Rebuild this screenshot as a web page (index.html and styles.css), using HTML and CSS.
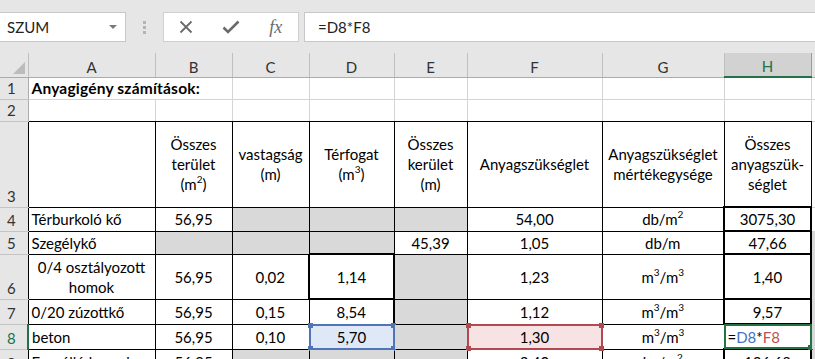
FILE: index.html
```html
<!DOCTYPE html>
<html lang="hu">

<head>
    <meta charset="UTF-8">
    <meta name="viewport" content="width=device-width, initial-scale=1.0">
    <title>Anyagigény számítások</title>
    <link rel="stylesheet" href="styles.css">
</head>

<body>
    <div class="toolbar">
        <div class="name-box">
            <span>SZUM</span>
            <span class="name-arrow"></span>
        </div>
        <div class="grip"><span></span><span></span><span></span></div>
        <div class="fx-box">
            <svg width="14" height="14" viewBox="0 0 14 14"><path d="M1.5 1.5L12.5 12.5M12.5 1.5L1.5 12.5" stroke="#6a6a6a" stroke-width="1.8" fill="none"/></svg>
            <svg width="18" height="14" viewBox="0 0 18 14"><path d="M1.5 7.5L6 12L16.5 1.5" stroke="#6a6a6a" stroke-width="2.6" fill="none"/></svg>
            <span class="fx">fx</span>
        </div>
        <div class="formula">=D8*F8</div>
    </div>

    <table class="sheet">
        <colgroup>
            <col class="col-rh">
            <col class="col-a">
            <col class="col-b">
            <col class="col-c">
            <col class="col-d">
            <col class="col-e">
            <col class="col-f">
            <col class="col-g">
            <col class="col-h">
            <col class="col-i">
        </colgroup>
        <tr class="row-hdr">
            <th class="corner"><span class="corner-tri"></span></th>
            <th class="ch">A</th>
            <th class="ch">B</th>
            <th class="ch">C</th>
            <th class="ch">D</th>
            <th class="ch">E</th>
            <th class="ch">F</th>
            <th class="ch">G</th>
            <th class="ch ch-sel">H</th>
            <th class="ch"></th>
        </tr>
        <tr class="row-1">
            <th class="rh">1</th>
            <td class="title" colspan="2">Anyagigény számítások:</td>
            <td></td><td></td><td></td><td></td><td></td><td></td><td></td>
        </tr>
        <tr class="row-2">
            <th class="rh">2</th>
            <td class="bb"></td><td class="bb"></td><td class="bb"></td><td class="bb"></td>
            <td class="bb"></td><td class="bb"></td><td class="bb"></td><td class="bb"></td>
            <td></td>
        </tr>
        <tr class="row-3">
            <th class="rh rh-t">3</th>
            <td class="t"></td>
            <td class="t c wrap">Összes<br>terület<br>(m<sup>2</sup>)</td>
            <td class="t c wrap">vastagság<br>(m)</td>
            <td class="t c wrap">Térfogat<br>(m<sup>3</sup>)</td>
            <td class="t c wrap">Összes<br>kerület<br>(m)</td>
            <td class="t c wrap">Anyagszükséglet</td>
            <td class="t c wrap">Anyagszükséglet<br>mértékegysége</td>
            <td class="t c wrap">Összes<br>anyagszük-<br>séglet</td>
            <td></td>
        </tr>
        <tr class="row-4">
            <th class="rh rh-t">4</th>
            <td class="t l">Térburkoló kő</td>
            <td class="t c">56,95</td>
            <td class="t grey"></td>
            <td class="t grey"></td>
            <td class="t grey"></td>
            <td class="t c">54,00</td>
            <td class="t c">db/m<sup>2</sup></td>
            <td class="t c thick">3075,30</td>
            <td></td>
        </tr>
        <tr class="row-5">
            <th class="rh rh-t">5</th>
            <td class="t l">Szegélykő</td>
            <td class="t grey"></td>
            <td class="t grey"></td>
            <td class="t grey"></td>
            <td class="t c">45,39</td>
            <td class="t c">1,05</td>
            <td class="t c">db/m</td>
            <td class="t c thick">47,66</td>
            <td class="grey-out"></td>
        </tr>
        <tr class="row-6">
            <th class="rh rh-t">6</th>
            <td class="t c wrap">0/4 osztályozott<br>homok</td>
            <td class="t c">56,95</td>
            <td class="t c">0,02</td>
            <td class="t c thick">1,14</td>
            <td class="t grey"></td>
            <td class="t c">1,23</td>
            <td class="t c">m<sup>3</sup>/m<sup>3</sup></td>
            <td class="t c thick">1,40</td>
            <td class="grey-out"></td>
        </tr>
        <tr class="row-7">
            <th class="rh rh-t">7</th>
            <td class="t l">0/20 zúzottkő</td>
            <td class="t c">56,95</td>
            <td class="t c">0,15</td>
            <td class="t c thick-r">8,54</td>
            <td class="t grey"></td>
            <td class="t c">1,12</td>
            <td class="t c">m<sup>3</sup>/m<sup>3</sup></td>
            <td class="t c thick">9,57</td>
            <td class="grey-out"></td>
        </tr>
        <tr class="row-8">
            <th class="rh rh-t rh-sel">8</th>
            <td class="t l">beton</td>
            <td class="t c">56,95</td>
            <td class="t c">0,10</td>
            <td class="t c ref-blue">5,70<span class="frame frame-blue"><i class="hd tl"></i><i class="hd tr"></i><i class="hd bl"></i><i class="hd br"></i></span></td>
            <td class="t grey"></td>
            <td class="t c ref-red">1,30<span class="frame frame-red"><i class="hd tl"></i><i class="hd tr"></i><i class="hd bl"></i><i class="hd br"></i></span></td>
            <td class="t c">m<sup>3</sup>/m<sup>3</sup></td>
            <td class="t l edit">=<span class="blue">D8</span>*<span class="red">F8</span><span class="frame frame-green"><i class="hd br"></i></span></td>
            <td class="grey-out"></td>
        </tr>
        <tr class="row-9">
            <th class="rh rh-t">9</th>
            <td class="t l">Fagyálló homok</td>
            <td class="t c">56,95</td>
            <td class="t grey"></td>
            <td class="t grey"></td>
            <td class="t grey"></td>
            <td class="t c">2,40</td>
            <td class="t c">kg/m<sup>2</sup></td>
            <td class="t c thick">136,68</td>
            <td class="grey-out"></td>
        </tr>
    </table>
</body>

</html>
```

FILE: styles.css
```css
* {
    margin: 0;
    padding: 0;
    box-sizing: border-box;
}

body {
    width: 815px;
    height: 359px;
    overflow: hidden;
    background-color: #fff;
    font-family: Lato, 'Open Sans', sans-serif;
    font-size: 15px;
    color: #000;
}

/* formula bar */

.toolbar {
    height: 53px;
    background-color: #e6e6e6;
    padding-top: 12px;
    display: flex;
    align-items: flex-start;
}

.name-box {
    width: 126px;
    height: 30px;
    background-color: #fff;
    border: 1px solid #c8c8c8;
    border-left: none;
    display: flex;
    align-items: center;
    justify-content: space-between;
    padding: 0 8px 0 7px;
    color: #222;
}

.name-arrow {
    width: 0;
    height: 0;
    border-left: 4px solid transparent;
    border-right: 4px solid transparent;
    border-top: 4px solid #7a7a7a;
}

.grip {
    width: 37px;
    height: 30px;
    display: flex;
    flex-direction: column;
    align-items: center;
    justify-content: center;
    gap: 2px;
}

.grip span {
    width: 3px;
    height: 3px;
    background-color: #b4b4b4;
}

.fx-box {
    width: 136px;
    height: 30px;
    background-color: #fff;
    border: 1px solid #d0d0d0;
    display: flex;
    align-items: center;
    justify-content: space-around;
}

.fx {
    font-family: 'Liberation Serif', serif;
    font-style: italic;
    font-size: 18px;
    color: #6a6a6a;
    width: 14px;
}

.formula {
    flex: 1;
    height: 30px;
    margin-left: 5px;
    background-color: #fff;
    border: 1px solid #c8c8c8;
    border-right: none;
    padding-left: 13px;
    display: flex;
    align-items: center;
    color: #222;
}

/* sheet */

.sheet {
    table-layout: fixed;
    border-collapse: collapse;
    width: 815px;
}

.col-rh { width: 28px; }
.col-a { width: 127px; }
.col-b { width: 77px; }
.col-c { width: 77px; }
.col-d { width: 85px; }
.col-e { width: 73px; }
.col-f { width: 135px; }
.col-g { width: 122px; }
.col-h { width: 87px; }
.col-i { width: 4px; }

.sheet td {
    border: 1px solid #d4d4d4;
    padding: 0 3px;
    white-space: nowrap;
    vertical-align: middle;
    line-height: 20px;
    position: relative;
}

.sheet th {
    background-color: #e6e6e6;
    font-weight: 400;
    color: #333;
}

.row-hdr { height: 24px; }
.row-1 { height: 22px; }
.row-2 { height: 22px; }
.row-3 { height: 86px; }
.row-4 { height: 24px; }
.row-5 { height: 23px; }
.row-6 { height: 45px; }
.row-7 { height: 25px; }
.row-8 { height: 25px; }
.row-9 { height: 25px; }

.corner {
    border-right: 1px solid #bfbfbf;
    border-bottom: 1px solid #ababab;
    position: relative;
}

.corner-tri {
    position: absolute;
    right: 3px;
    bottom: 3px;
    width: 0;
    height: 0;
    border-left: 12px solid transparent;
    border-bottom: 12px solid #bcbcbc;
}

.ch {
    border-right: 1px solid #bfbfbf;
    border-bottom: 1px solid #ababab;
    text-align: center;
    vertical-align: bottom;
    padding-bottom: 1px;
}

.ch-sel {
    background-color: #d2d2d2 !important;
    color: #217346 !important;
    border-bottom: 2px solid #217346;
    border-right: 1px solid #9c9c9c;
}

.rh {
    border-right: 1px solid #ababab;
    border-bottom: 1px solid #c4c4c4;
    text-align: left;
    vertical-align: bottom;
    padding-left: 7px;
    line-height: 21px;
}

.rh-t {
    border-right: 1px solid #000;
}

.rh-sel {
    color: #217346 !important;
    border-right: 2px solid #217346;
}

.title {
    font-weight: 700;
    font-size: 15.5px;
    letter-spacing: 0.2px;
}

.bb {
    border-bottom: 1px solid #000 !important;
}

.sheet td.t {
    border: 1px solid #000;
}

.sheet td.thick {
    border: 2px solid #000;
}

.sheet td.thick-r {
    border-right: 2px solid #000;
}

.c { text-align: center; }
.l { text-align: left; }

.wrap {
    line-height: 22px;
    white-space: normal;
}

sup {
    font-size: 10px;
    line-height: 0;
    vertical-align: 7px;
}

.grey {
    background-color: #d9d9d9;
}

.grey-out {
    background-color: #d9d9d9;
}

/* reference highlights */

.ref-blue { background-color: #dfe8f6; }
.ref-red { background-color: #f7e3e3; }

.blue { color: #4472c4; }
.red { color: #c0504d; }

.frame {
    position: absolute;
    top: -1px;
    left: -1px;
    right: -1px;
    bottom: -1px;
    border: 2px solid;
}

.frame-blue { border-color: #4f74b8; color: #4f74b8; }
.frame-red { border-color: #b04a50; color: #b04a50; }
.frame-green { border-color: #217346; color: #217346; }

.hd {
    position: absolute;
    width: 5px;
    height: 5px;
    background-color: currentColor;
}

.hd.tl { left: -3px; top: -3px; }
.hd.tr { right: -3px; top: -3px; }
.hd.bl { left: -3px; bottom: -3px; }
.hd.br { right: -3px; bottom: -3px; }
```
